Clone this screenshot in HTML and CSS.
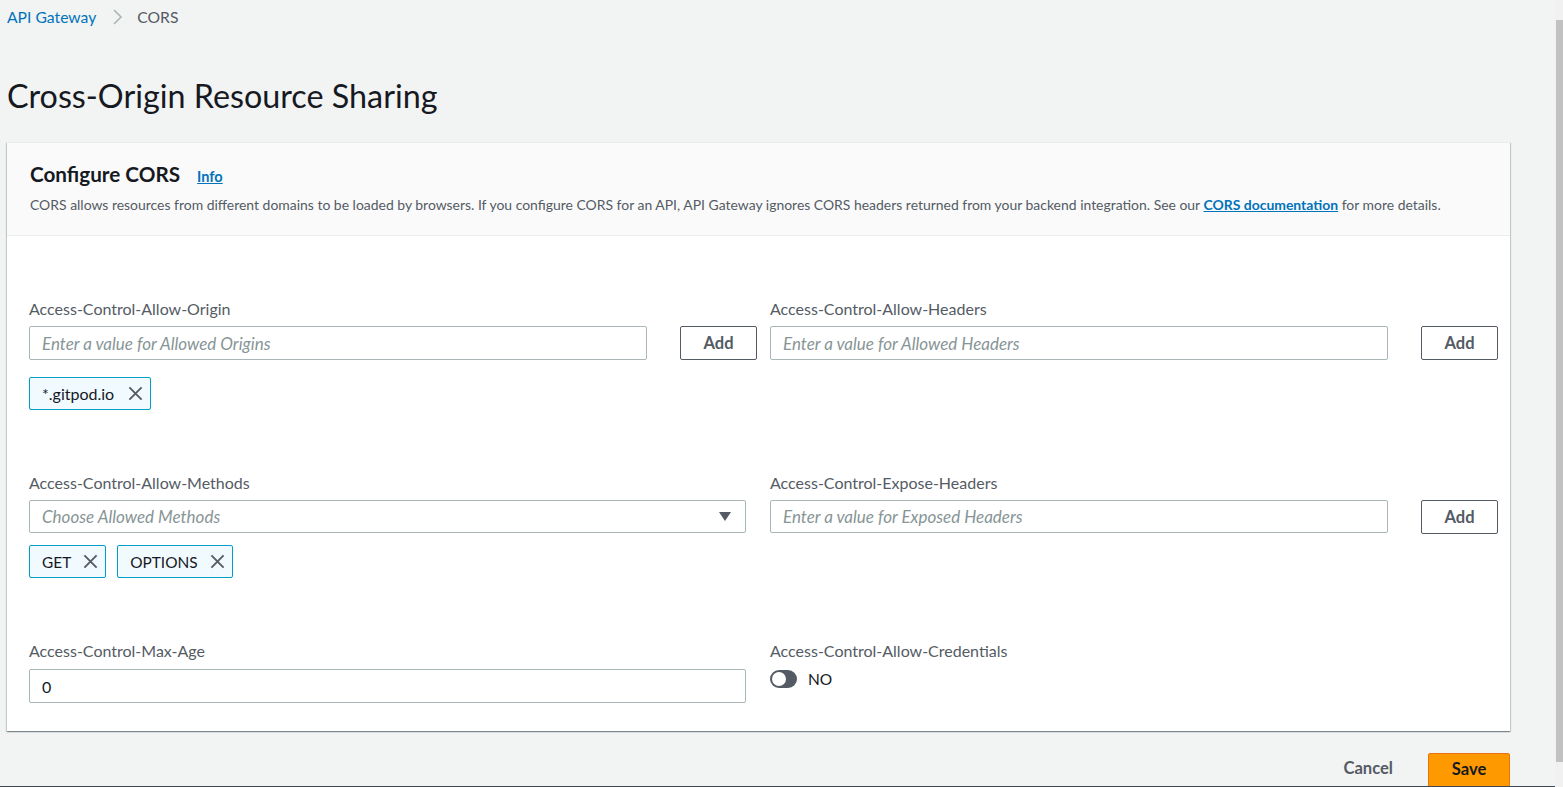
FILE: index.html
```html
<!DOCTYPE html>
<html lang="en">
<head>
<meta charset="utf-8">
<title>Cross-Origin Resource Sharing</title>
<link rel="stylesheet" href="styles.css">
</head>
<body>
<div class="page">
  <nav class="breadcrumb">
    <a class="crumb-link" href="#">API Gateway</a>
    <svg class="crumb-sep" width="12" height="16" viewBox="0 0 12 16"><polyline points="3,1 10,8 3,15" fill="none" stroke="#aab7b8" stroke-width="1.6"/></svg>
    <span class="crumb-current">CORS</span>
  </nav>

  <h1 class="page-title">Cross-Origin Resource Sharing</h1>

  <section class="card">
    <header class="card-head">
      <div class="title-row">
        <h2 class="card-title">Configure CORS</h2>
        <a class="info-link" href="#">Info</a>
      </div>
      <p class="card-desc">CORS allows resources from different domains to be loaded by browsers. If you configure CORS for an API, API Gateway ignores CORS headers returned from your backend integration. See our <a class="doc-link" href="#">CORS documentation</a> for more details.</p>
    </header>

    <div class="card-body">
      <div class="field">
        <div class="label">Access-Control-Allow-Origin</div>
        <div class="add-row">
          <div class="input"><span class="placeholder">Enter a value for Allowed Origins</span></div>
          <div class="btn-add">Add</div>
        </div>
        <div class="tokens">
          <span class="token">*.gitpod.io<svg class="x" width="15" height="15" viewBox="0 0 16 16"><path d="M1.5 1.5 L14.5 14.5 M14.5 1.5 L1.5 14.5" stroke="#545b64" stroke-width="2" fill="none"/></svg></span>
        </div>
      </div>

      <div class="field">
        <div class="label">Access-Control-Allow-Headers</div>
        <div class="add-row">
          <div class="input"><span class="placeholder">Enter a value for Allowed Headers</span></div>
          <div class="btn-add">Add</div>
        </div>
      </div>

      <div class="field">
        <div class="label">Access-Control-Allow-Methods</div>
        <div class="input select"><span class="placeholder">Choose Allowed Methods</span><svg class="caret" width="12" height="9" viewBox="0 0 12 9"><polygon points="0,0 12,0 6,9" fill="#545b64"/></svg></div>
        <div class="tokens tokens-tight">
          <span class="token token-caps">GET<svg class="x" width="15" height="15" viewBox="0 0 16 16"><path d="M1.5 1.5 L14.5 14.5 M14.5 1.5 L1.5 14.5" stroke="#545b64" stroke-width="2" fill="none"/></svg></span>
          <span class="token token-caps">OPTIONS<svg class="x" width="15" height="15" viewBox="0 0 16 16"><path d="M1.5 1.5 L14.5 14.5 M14.5 1.5 L1.5 14.5" stroke="#545b64" stroke-width="2" fill="none"/></svg></span>
        </div>
      </div>

      <div class="field">
        <div class="label">Access-Control-Expose-Headers</div>
        <div class="add-row">
          <div class="input input-short"><span class="placeholder">Enter a value for Exposed Headers</span></div>
          <div class="btn-add btn-short">Add</div>
        </div>
      </div>

      <div class="field">
        <div class="label label-last">Access-Control-Max-Age</div>
        <div class="input"><span class="value">0</span></div>
      </div>

      <div class="field">
        <div class="label label-last">Access-Control-Allow-Credentials</div>
        <div class="toggle-row">
          <span class="toggle"><span class="knob"></span></span>
          <span class="toggle-text">NO</span>
        </div>
      </div>
    </div>
  </section>

  <div class="actions">
    <span class="btn-cancel">Cancel</span>
    <span class="btn-save">Save</span>
  </div>
</div>

<div class="scrollbar"><div class="scroll-up"></div><div class="scroll-thumb"></div></div>
<div class="footer-line"></div>
</body>
</html>
```

FILE: styles.css
```css
* { box-sizing: border-box; }

html, body {
  margin: 0;
  padding: 0;
  height: 787px;
  overflow: hidden;
  background: #f2f3f3;
  font-family: "Lato", "Liberation Sans", sans-serif;
  color: #16191f;
}

.page {
  width: 1503px;
  margin-left: 7px;
}

.breadcrumb {
  display: flex;
  align-items: center;
  height: 20px;
  margin-top: 7px;
  font-size: 15.7px;
}

.crumb-link {
  color: #0073bb;
  text-decoration: none;
}

.crumb-sep {
  margin: 0 14px 0 15px;
}

.crumb-current {
  color: #545b64;
}

.page-title {
  margin: 51px 0 28px;
  font-size: 32.3px;
  line-height: 36px;
  font-weight: 400;
  color: #16191f;
}

.card {
  background: #fff;
  border-top: 1px solid #eaeded;
  box-shadow: 0 1px 1px 0 rgba(0, 28, 36, 0.3), 1px 1px 1px 0 rgba(0, 28, 36, 0.15), -1px 1px 1px 0 rgba(0, 28, 36, 0.15);
}

.card-head {
  background: #fafafa;
  border-bottom: 1px solid #eaeded;
  padding: 18px 20px 20px 23px;
}

.title-row {
  display: flex;
  align-items: baseline;
  gap: 17px;
}

.card-title {
  margin: 0;
  font-size: 20.7px;
  line-height: 26px;
  font-weight: 700;
}

.info-link {
  font-size: 14.5px;
  font-weight: 700;
  color: #0073bb;
  text-decoration: underline;
}

.card-desc {
  margin: 8px 0 0;
  font-size: 13.95px;
  line-height: 20px;
  color: #545b64;
}

.doc-link {
  color: #0073bb;
  font-weight: 700;
  text-decoration: underline;
}

.card-body {
  display: grid;
  grid-template-columns: 717px 717px;
  column-gap: 24px;
  row-gap: 62px;
  padding: 62px 12px 28px 22px;
}

.field {
  display: flex;
  flex-direction: column;
}

.label {
  font-size: 16px;
  line-height: 22px;
  color: #545b64;
  margin-bottom: 6px;
}

.label-last {
  margin-bottom: 7px;
}

.add-row {
  display: flex;
  width: 728px;
  gap: 33px;
}

.add-row .input {
  width: 618px;
}

.input {
  height: 34px;
  border: 1px solid #aab7b8;
  border-radius: 2px;
  background: #fff;
  display: flex;
  align-items: center;
  padding: 0 12px;
  font-size: 16px;
}

.input-short,
.btn-short {
  height: 33px;
}

.placeholder {
  color: #879596;
  font-style: italic;
  font-size: 17px;
}

.value {
  color: #16191f;
}

.select {
  height: 33px;
  justify-content: space-between;
  padding-right: 14px;
}

.btn-add {
  width: 77px;
  height: 34px;
  border: 1px solid #545b64;
  border-radius: 2px;
  display: flex;
  align-items: center;
  justify-content: center;
  font-size: 16.5px;
  font-weight: 700;
  color: #545b64;
  background: #fff;
}

.tokens {
  display: flex;
  gap: 11px;
  margin-top: 17px;
}

.tokens-tight {
  margin-top: 12px;
}

.token {
  display: inline-flex;
  align-items: center;
  height: 33px;
  padding: 0 7px 0 12px;
  background: #f1faff;
  border: 1px solid #00a1c9;
  border-radius: 2px;
  font-size: 16px;
  color: #16191f;
}

.token .x {
  margin-left: 14px;
}

.token-caps {
  font-size: 15.4px;
}

.token-caps .x {
  margin-left: 12px;
}

.toggle-row {
  display: flex;
  align-items: center;
  gap: 11px;
  height: 20px;
}

.toggle {
  width: 27px;
  height: 18px;
  border-radius: 9px;
  background: #545b64;
  position: relative;
  display: inline-block;
}

.knob {
  position: absolute;
  left: 2px;
  top: 2px;
  width: 14px;
  height: 14px;
  border-radius: 50%;
  background: #fff;
}

.toggle-text {
  font-size: 15.5px;
  color: #16191f;
}

.actions {
  display: flex;
  justify-content: flex-end;
  align-items: flex-start;
  margin-top: 22px;
  gap: 15px;
}

.btn-cancel {
  padding: 0 20px;
  margin-top: 5px;
  font-size: 16.6px;
  line-height: 20px;
  font-weight: 700;
  color: #545b64;
}

.btn-save {
  width: 82px;
  height: 34px;
  display: flex;
  align-items: center;
  justify-content: center;
  padding-bottom: 3px;
  background: #ff9900;
  border: 1px solid #ec7211;
  border-radius: 2px;
  font-size: 16.6px;
  font-weight: 700;
  color: #16191f;
}

.scrollbar {
  position: fixed;
  top: 0;
  right: 0;
  width: 8px;
  height: 787px;
  background: #f1f1f1;
}

.scroll-up {
  height: 20px;
}

.scroll-thumb {
  margin-left: 1px;
  width: 7px;
  height: 742px;
  background: #c1c1c1;
}

.footer-line {
  position: fixed;
  left: 0;
  bottom: 0;
  width: 1555px;
  height: 1px;
  background: #414750;
}
```
